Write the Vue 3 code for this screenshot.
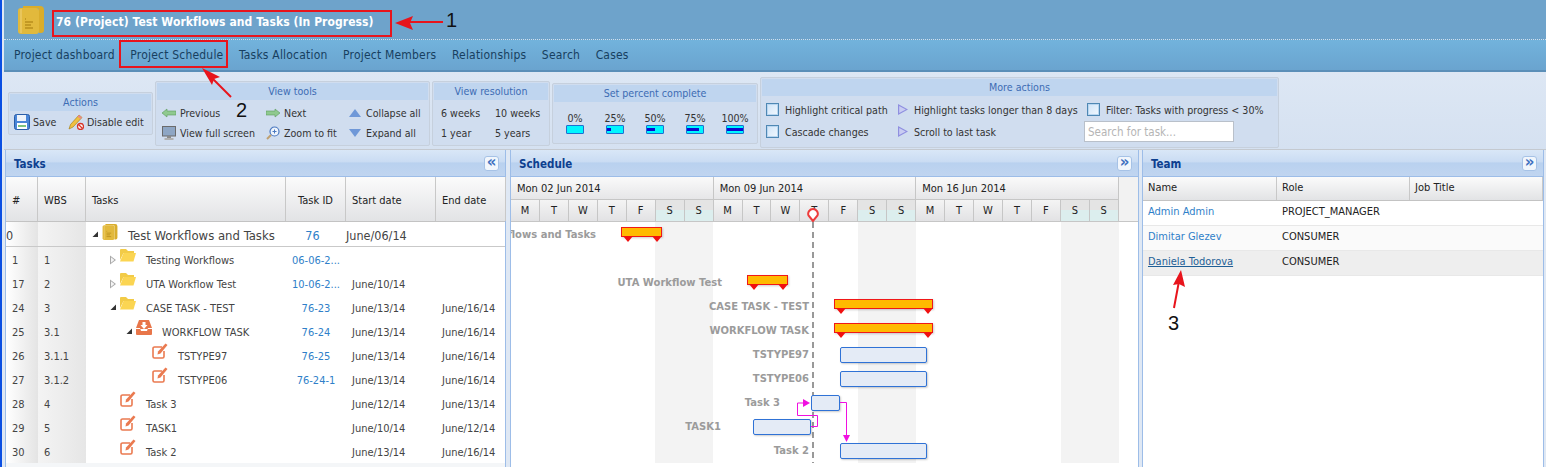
<script setup>
import { computed } from 'vue'

const navItems = ['Project dashboard', 'Project Schedule', 'Tasks Allocation', 'Project Members', 'Relationships', 'Search', 'Cases']

const tasks = [
  { num: 1, wbs: '1', level: 24, tree: 'open', icon: 'folder', name: 'Testing Workflows', id: '06-06-2...', start: '', end: '' },
  { num: 17, wbs: '2', level: 24, tree: 'open', icon: 'folder', name: 'UTA Workflow Test', id: '10-06-2...', start: 'June/10/14', end: '' },
  { num: 24, wbs: '3', level: 24, tree: 'down', icon: 'folder', name: 'CASE TASK - TEST', id: '76-23', start: 'June/13/14', end: 'June/16/14' },
  { num: 25, wbs: '3.1', level: 40, tree: 'down', icon: 'inbox', name: 'WORKFLOW TASK', id: '76-24', start: 'June/13/14', end: 'June/16/14' },
  { num: 26, wbs: '3.1.1', level: 56, tree: '', icon: 'edit', name: 'TSTYPE97', id: '76-25', start: 'June/13/14', end: 'June/16/14' },
  { num: 27, wbs: '3.1.2', level: 56, tree: '', icon: 'edit', name: 'TSTYPE06', id: '76-24-1', start: 'June/13/14', end: 'June/16/14' },
  { num: 28, wbs: '4', level: 24, tree: '', icon: 'edit', name: 'Task 3', id: '', start: 'June/12/14', end: 'June/13/14' },
  { num: 29, wbs: '5', level: 24, tree: '', icon: 'edit', name: 'TASK1', id: '', start: 'June/10/14', end: 'June/12/14' },
  { num: 30, wbs: '6', level: 24, tree: '', icon: 'edit', name: 'Task 2', id: '', start: 'June/13/14', end: 'June/16/14' }
]

const weeks = ['Mon 02 Jun 2014', 'Mon 09 Jun 2014', 'Mon 16 Jun 2014']
const days = computed(() => weeks.flatMap(() => ['M', 'T', 'W', 'T', 'F', 'S', 'S']))

// x and y are page coordinates of the chart, the canvas starts at 511,222
const bars = [
  { x: 621, y: 227, w: 41, h: 10, kind: 'summary' },
  { x: 747, y: 275, w: 41, h: 10, kind: 'summary' },
  { x: 834, y: 299, w: 99, h: 10, kind: 'summary' },
  { x: 834, y: 323, w: 99, h: 10, kind: 'summary' },
  { x: 840, y: 347, w: 87, h: 16, kind: 'task' },
  { x: 840, y: 371, w: 87, h: 16, kind: 'task' },
  { x: 811, y: 395, w: 29, h: 16, kind: 'task' },
  { x: 753, y: 419, w: 58, h: 16, kind: 'task' },
  { x: 840, y: 443, w: 87, h: 16, kind: 'task' }
]
const labels = [
  { text: 'Test Workflows and Tasks', end: 597, y: 235 },
  { text: 'UTA Workflow Test', end: 723, y: 283 },
  { text: 'CASE TASK - TEST', end: 810, y: 307 },
  { text: 'WORKFLOW TASK', end: 810, y: 331 },
  { text: 'TSTYPE97', end: 810, y: 355 },
  { text: 'TSTYPE06', end: 810, y: 379 },
  { text: 'Task 3', end: 781, y: 403 },
  { text: 'TASK1', end: 722, y: 427 },
  { text: 'Task 2', end: 810, y: 451 }
]
const weekendBands = [144, 347, 550]

const percents = [0, 25, 50, 75, 100]

const team = [
  { name: 'Admin Admin', role: 'PROJECT_MANAGER' },
  { name: 'Dimitar Glezev', role: 'CONSUMER' },
  { name: 'Daniela Todorova', role: 'CONSUMER', active: true }
]
</script>

<template>
  <div class="page">
    <svg class="defs" width="0" height="0">
      <symbol id="book" viewBox="0 0 26 28">
        <path d="M5 0h17a4 4 0 0 1 4 4v20a3 3 0 0 1-3 3H21V4a2 2 0 0 0-2-2H5z" fill="#d9ad2c" />
        <rect y="2" width="21" height="26" rx="3" fill="#e2b93c" />
        <path d="M3 3v24" stroke="#efd27c" stroke-width="1" />
        <path d="M7 13h1M7 16h8M7 19h6M7 22h8" stroke="#b98f1d" stroke-width="1.4" />
      </symbol>
      <symbol id="folder" viewBox="0 0 16 14">
        <path d="M0 2a1 1 0 0 1 1-1h5l2 2h6v2H3.500L0 12z" fill="#f2cb47" />
        <path d="M3.500 5H16l-2.500 8.500H0z" fill="#fbd552" />
      </symbol>
      <symbol id="inbox" viewBox="0 0 16 16">
        <path d="M3 1h10l3 8v6a1 1 0 0 1-1 1H1a1 1 0 0 1-1-1V9z" fill="#e8764a" />
        <path d="M0 9h4l1 3h6l1-3h4v1H0z" fill="#fff" />
        <path d="M6.500 3h3v3h2l-3.500 4L4.500 6h2z" fill="#fff" />
      </symbol>
      <symbol id="edit" viewBox="0 0 16 16">
        <path d="M10 4H2.500A1.500 1.500 0 0 0 1 5.500v8A1.500 1.500 0 0 0 2.500 15h8a1.500 1.500 0 0 0 1.500-1.500V8" fill="none" stroke="#ea7a50" stroke-width="1.600" />
        <path d="M13.500 0.500l2 1.500L8.500 10.500 5.500 11.500 6 8.500z" fill="#ea7a50" />
      </symbol>
    </svg>

    <header class="title-bar">
      <svg class="title-icon"><use href="#book" /></svg>
      <h1 class="title">76 (Project) Test Workflows and Tasks (In Progress)</h1>
    </header>

    <nav class="nav">
      <a v-for="item in navItems" :key="item" class="nav-item">{{ item }}</a>
    </nav>

    <section class="toolbar">
      <div class="group group-actions">
        <div class="group-title">Actions</div>
        <div class="group-body actions-body">
          <span class="tool">
            <svg class="icon16" viewBox="0 0 16 16">
              <rect x="0.500" y="0.500" width="15" height="15" rx="2" fill="#4a86d8" stroke="#2a5ea8" />
              <rect x="3" y="1" width="9" height="6" fill="#eef3fa" />
              <rect x="3" y="9" width="10" height="6" fill="#fff" />
              <rect x="4" y="11" width="8" height="2" fill="#7fc47f" />
            </svg>
            Save
          </span>
          <span class="tool">
            <svg class="icon16" viewBox="0 0 16 16">
              <path d="M11 1l3 2.500L5 13l-4 2 1.500-4.500z" fill="#f0c040" stroke="#a8841e" stroke-width="0.700" />
              <path d="M11 1l3 2.500-1.500 1.500-3-2.500z" fill="#e88a8a" />
              <circle cx="12.500" cy="12.500" r="3" fill="#fff" stroke="#d8362a" stroke-width="1.300" />
              <path d="M10.500 10.500l4 4" stroke="#d8362a" stroke-width="1.300" />
            </svg>
            Disable edit
          </span>
        </div>
      </div>

      <div class="group group-view">
        <div class="group-title">View tools</div>
        <div class="group-body view-grid">
          <span class="tool">
            <svg class="icon14" viewBox="0 0 14 10"><path d="M0 5l5-4v2h9v4H5v2z" fill="#8fc98f" stroke="#5a9a5a" stroke-width="0.600" /></svg>
            Previous
          </span>
          <span class="tool">
            <svg class="icon14" viewBox="0 0 14 10"><path d="M14 5L9 1v2H0v4h9v2z" fill="#8fc98f" stroke="#5a9a5a" stroke-width="0.600" /></svg>
            Next
          </span>
          <span class="tool tool-small">
            <svg class="icon12" viewBox="0 0 12 8"><path d="M6 0l6 8H0z" fill="#6f98d8" /></svg>
            Collapse all
          </span>
          <span class="tool">
            <svg class="icon14" viewBox="0 0 14 14">
              <rect x="0.500" y="0.500" width="13" height="9.500" fill="#8ea6c4" stroke="#6b6b6b" />
              <rect x="5" y="10" width="4" height="2" fill="#8a8a8a" />
              <rect x="2.500" y="12" width="9" height="2" fill="#b0b0b0" />
            </svg>
            View full screen
          </span>
          <span class="tool">
            <svg class="icon14" viewBox="0 0 14 14">
              <circle cx="8.500" cy="5.500" r="4.500" fill="#eef4fc" stroke="#4a78c0" stroke-width="1.200" />
              <path d="M5 9l-4 4" stroke="#c0a070" stroke-width="2" />
              <path d="M6.500 5.500h4M8.500 3.500v4" stroke="#4a78c0" stroke-width="1" />
            </svg>
            Zoom to fit
          </span>
          <span class="tool tool-small">
            <svg class="icon12" viewBox="0 0 12 8"><path d="M6 8l6-8H0z" fill="#6f98d8" /></svg>
            Expand all
          </span>
        </div>
      </div>

      <div class="group group-res">
        <div class="group-title">View resolution</div>
        <div class="group-body res-grid">
          <span>6 weeks</span><span>10 weeks</span>
          <span>1 year</span><span>5 years</span>
        </div>
      </div>

      <div class="group group-percent">
        <div class="group-title">Set percent complete</div>
        <div class="group-body percent-row">
          <div v-for="p in percents" :key="p" class="percent-item">
            <span class="percent-label">{{ p }}%</span>
            <span class="percent-bar"><i :style="{ width: p * 0.16 + 'px' }"></i></span>
          </div>
        </div>
      </div>

      <div class="group group-more">
        <div class="group-title">More actions</div>
        <div class="group-body more-grid">
          <label class="check"><i class="box"></i>Highlight critical path</label>
          <span class="tool more-link"><i class="play"></i>Highlight tasks longer than 8 days</span>
          <label class="check"><i class="box"></i>Filter: Tasks with progress &lt; 30%</label>
          <label class="check"><i class="box"></i>Cascade changes</label>
          <span class="tool more-link"><i class="play"></i>Scroll to last task</span>
          <input class="search" placeholder="Search for task..." />
        </div>
      </div>
    </section>

    <main class="panels">
      <section class="panel panel-tasks">
        <div class="panel-head">
          <span>Tasks</span>
          <button class="collapse">«</button>
        </div>
        <div class="table-head task-cols">
          <div>#</div><div>WBS</div><div>Tasks</div><div class="id-head">Task ID</div><div>Start date</div><div>End date</div>
        </div>
        <div class="root-row task-cols">
          <div class="c-num root-num">0</div>
          <div class="c-wbs"></div>
          <div class="c-name root-name">
            <i class="tree down"></i>
            <svg class="tree-icon"><use href="#book" /></svg>
            <span>Test Workflows and Tasks</span>
          </div>
          <div class="c-id root-id">76</div>
          <div class="root-start">June/06/14</div>
          <div></div>
        </div>
        <div v-for="t in tasks" :key="t.num" class="task-row task-cols">
          <div class="c-num">{{ t.num }}</div>
          <div class="c-wbs">{{ t.wbs }}</div>
          <div class="c-name" :style="{ paddingLeft: t.level + 'px' }">
            <i class="tree" :class="t.tree"></i>
            <svg class="tree-icon"><use :href="'#' + t.icon" /></svg>
            <span>{{ t.name }}</span>
          </div>
          <div class="c-id">{{ t.id }}</div>
          <div class="c-date">{{ t.start }}</div>
          <div class="c-date">{{ t.end }}</div>
        </div>
      </section>

      <section class="panel panel-schedule">
        <div class="panel-head">
          <span>Schedule</span>
          <button class="collapse">»</button>
        </div>
        <div class="calendar">
          <div class="weeks">
            <div v-for="w in weeks" :key="w" class="week">{{ w }}</div>
          </div>
          <div class="days">
            <div v-for="(d, i) in days" :key="i" class="day" :class="{ weekend: d === 'S' }">{{ d }}</div>
          </div>
          <div class="cal-spare"></div>
        </div>
        <div class="chart">
          <div v-for="b in weekendBands" :key="b" class="band" :style="{ left: b + 'px' }"></div>
          <div class="today"></div>
          <div
            v-for="l in labels"
            :key="l.text"
            class="bar-label"
            :style="{ right: 628 - (l.end - 511) + 'px', top: l.y - 222 - 8 + 'px' }"
          >{{ l.text }}</div>
          <div
            v-for="(b, i) in bars"
            :key="i"
            class="bar"
            :class="b.kind"
            :style="{ left: b.x - 511 + 'px', top: b.y - 222 + 'px', width: b.w + 'px', height: b.h + 'px' }"
          ></div>
          <svg class="links" width="628" height="245">
            <path d="M329 180.500h6.500V214" fill="none" stroke="#f010e0" stroke-width="1" />
            <path d="M332 213h7l-3.500 7z" fill="#f010e0" />
            <path d="M300 204.500h6.500v-11h-20V181H293" fill="none" stroke="#f010e0" stroke-width="1" />
            <path d="M292 177l7 4-7 4z" fill="#f010e0" />
          </svg>
        </div>
        <svg class="today-pin" viewBox="0 0 12 14">
          <path d="M6 13L1.500 7.500A4.800 4.800 0 1 1 10.500 7.500z" fill="#fff" stroke="#ee3b3b" stroke-width="2" />
        </svg>
      </section>

      <section class="panel panel-team">
        <div class="panel-head">
          <span>Team</span>
          <button class="collapse">»</button>
        </div>
        <div class="team-head team-cols">
          <div>Name</div><div>Role</div><div>Job Title</div>
        </div>
        <div v-for="m in team" :key="m.name" class="team-row team-cols" :class="{ active: m.active }">
          <a class="team-name">{{ m.name }}</a>
          <div>{{ m.role }}</div>
          <div></div>
        </div>
      </section>
    </main>

    <!-- annotations painted over the screenshot -->
    <div class="mark mark-title"></div>
    <div class="mark mark-nav"></div>
    <svg class="arrows" width="1546" height="467">
      <g stroke="#e8141c" stroke-width="2" fill="#e8141c">
        <path d="M443 22H408" />
        <path d="M395 23l18-7-3 7 3 7z" stroke="none" />
        <path d="M231 97L212 78" />
        <path d="M202 68l18 9-6 2-2 6z" stroke="none" />
        <path d="M1174 308l5-27" />
        <path d="M1181 270l4 17-6-3-6 1z" stroke="none" />
      </g>
    </svg>
    <span class="callout callout-1">1</span>
    <span class="callout callout-2">2</span>
    <span class="callout callout-3">3</span>
  </div>
</template>

<style scoped>
.page {
  position: relative;
  display: flex;
  flex-direction: column;
  width: 1546px;
  height: 467px;
  overflow: hidden;
  box-sizing: border-box;
  border-left: 2px solid #0b4fe2;
  padding-left: 2px;
  background: #dfe8f4;
  font-family: "DejaVu Sans", sans-serif;
  font-stretch: condensed;
  font-size: 11px;
  color: #333;
}
.defs {
  position: absolute;
}

.title-bar {
  display: flex;
  align-items: center;
  height: 40px;
  flex: none;
  box-sizing: border-box;
  padding-left: 14px;
  background: #6ea3cb;
  border-bottom: 1px dotted #cfe0ee;
}
.title-icon {
  width: 26px;
  height: 28px;
  margin-top: 1px;
}
.title {
  margin: 4px 0 0 12px;
  font-size: 12px;
  font-weight: 700;
  letter-spacing: 0.070px;
  color: #fff;
}

.nav {
  display: flex;
  flex: none;
  align-items: center;
  gap: 15.500px;
  height: 32px;
  box-sizing: border-box;
  padding: 0 0 0 10px;
  background: linear-gradient(#72b3dc, #6aa4cf);
  border-bottom: 2px solid #5b8fb8;
}
.nav-item {
  color: #173f60;
  font-size: 12px;
  letter-spacing: 0.200px;
}

.toolbar {
  display: flex;
  flex: none;
  align-items: center;
  gap: 2px;
  height: 78px;
  box-sizing: border-box;
  padding: 5px 0 0 4px;
  font-size: 10.600px;
  background: linear-gradient(#dde7f4, #d5e1f1);
  border-bottom: 1px solid #c4c9d0;
}
.group {
  display: flex;
  flex-direction: column;
  flex: none;
  box-sizing: border-box;
  padding: 1px;
  border: 1px solid #c6d0dd;
  border-radius: 2px;
  background: #d0ddef;
}
.group-title {
  flex: none;
  height: 17px;
  line-height: 17px;
  text-align: center;
  color: #3d6cb4;
  background: #bfd5ef;
}
.group-body {
  flex: 1;
  min-height: 0;
}
.tool {
  display: flex;
  align-items: center;
  gap: 4px;
  white-space: nowrap;
}
.icon16 {
  width: 16px;
  height: 16px;
}
.icon14 {
  width: 14px;
  height: 14px;
}
.icon12 {
  width: 12px;
  height: 8px;
}
.group-actions {
  width: 145px;
  height: 43px;
}
.actions-body {
  display: grid;
  grid-template-columns: 54px auto;
  align-items: center;
  padding-left: 4px;
}
.actions-body .tool {
  gap: 3px;
}
.group-view {
  width: 275px;
  height: 65px;
}
.view-grid {
  display: grid;
  grid-template-columns: 104px 83px auto;
  align-items: center;
  padding: 3px 0 0 5px;
}
.view-grid .tool-small {
  gap: 5px;
}
.group-res {
  width: 118px;
  height: 65px;
}
.res-grid {
  display: grid;
  grid-template-columns: 54px auto;
  align-items: center;
  padding: 3px 0 0 7px;
}
.group-percent {
  width: 206px;
  height: 61px;
}
.percent-row {
  display: grid;
  grid-template-columns: repeat(5, 40px);
  padding: 11px 0 0 1px;
}
.percent-item {
  display: flex;
  flex-direction: column;
  align-items: center;
  gap: 1px;
}
.percent-label {
  line-height: 11px;
}
.percent-bar {
  display: flex;
  align-items: center;
  width: 18px;
  height: 9px;
  box-sizing: border-box;
  background: #00f6ff;
  border: 1px solid #1f6fd0;
  border-radius: 1px;
}
.percent-bar i {
  display: block;
  height: 3px;
  background: #0a0ad0;
}
.group-more {
  width: 519px;
  height: 71px;
  margin-top: -2px;
}
.more-grid {
  display: grid;
  grid-template-columns: 132px 189px auto;
  grid-template-rows: 22px 22px;
  align-items: center;
  padding: 3px 0 0 4px;
}
.check {
  display: flex;
  align-items: center;
  gap: 6px;
  white-space: nowrap;
}
.box {
  display: block;
  width: 13px;
  height: 13px;
  box-sizing: border-box;
  border: 1px solid #4f88b4;
  box-shadow: inset 0 0 0 1px #b9d6f0;
  background: linear-gradient(135deg, #cfe4f8, #f2f8fe);
}
.more-link {
  gap: 6px;
}
.play {
  position: relative;
  display: block;
  width: 10px;
  height: 11px;
  clip-path: polygon(0 0, 100% 50%, 0 100%);
  background: #8f8fe0;
}
.play::after {
  content: "";
  position: absolute;
  inset: 0;
  clip-path: polygon(12% 18%, 78% 50%, 12% 82%);
  background: #c9cdf2;
}
.search {
  width: 150px;
  height: 21px;
  box-sizing: border-box;
  padding: 0 3px;
  margin-left: -3px;
  border: 1px solid #b9c0ca;
  font-family: inherit;
  font-stretch: condensed;
  font-size: 11.500px;
  background: #fff;
}
.search::placeholder {
  color: #b5b5b5;
}

.panels {
  display: flex;
  flex: 1;
  min-height: 0;
  padding-left: 1px;
}
.panel {
  display: flex;
  flex-direction: column;
  flex: none;
  box-sizing: border-box;
  background: #fff;
  border-left: 1px solid #9dbde8;
  border-right: 1px solid #9dbde8;
}
.panel-tasks {
  width: 501px;
  background: #f4f6f8;
}
.panel-schedule {
  position: relative;
  width: 629px;
  margin-left: 4px;
}
.panel-team {
  width: 402px;
  margin-left: 3px;
}
.panel-head {
  display: flex;
  justify-content: space-between;
  align-items: center;
  flex: none;
  height: 27px;
  box-sizing: border-box;
  padding: 0 6px 0 8px;
  color: #0d3f8f;
  font-size: 11.500px;
  font-weight: 700;
  background: linear-gradient(#d9e7f7 0, #cadcf3 45%, #b9d1ef 50%, #c0d5f0 100%);
  border-bottom: 1px solid #9dbde8;
}
.panel-head span {
  padding-top: 2px;
}
.collapse {
  width: 15px;
  height: 15px;
  padding: 0 0 2px;
  border: 1px solid #a6c2e6;
  border-radius: 3px;
  background: #f1f6fc;
  color: #3d70c0;
  font-family: inherit;
  font-size: 15px;
  line-height: 10px;
  font-weight: 700;
}

.task-cols {
  display: grid;
  grid-template-columns: 32px 48px 200px 60px 90px 70px;
}
.table-head {
  flex: none;
  height: 45px;
  box-sizing: border-box;
  align-items: stretch;
  color: #222;
  background: linear-gradient(#fbfbfb, #e2e3e5);
  border-bottom: 1px solid #c3c3c3;
}
.table-head > div {
  display: flex;
  align-items: center;
  padding: 2px 0 0 6px;
  border-right: 1px solid #c8c8c8;
}
.table-head .id-head {
  justify-content: center;
  padding-left: 0;
}
.root-row {
  flex: none;
  height: 25px;
  align-items: center;
  background: #fff;
  border-bottom: 1px solid #c9c9c9;
  box-sizing: border-box;
  font-size: 12.500px;
}
.task-row {
  flex: none;
  height: 24px;
  align-items: center;
  background: #fff;
}
.c-num {
  align-self: stretch;
  display: flex;
  align-items: center;
  padding: 2px 0 0 6px;
  background: linear-gradient(90deg, #fff, #e4e4e4);
  color: #444;
}
.c-wbs {
  align-self: stretch;
  display: flex;
  align-items: center;
  padding: 2px 0 0 6px;
  background: linear-gradient(90deg, #f4f4f4, #e6e6e6);
  color: #444;
}
.root-num {
  padding-left: 0;
}
.c-name {
  display: flex;
  align-items: center;
  padding-top: 2px;
  color: #444;
  white-space: nowrap;
}
.root-name {
  padding-left: 6px;
  font-size: 13px;
}
.tree {
  position: relative;
  display: block;
  flex: none;
  width: 10px;
  height: 10px;
}
.tree.open {
  clip-path: polygon(0 5%, 60% 50%, 0 95%);
  background: #a9a9a9;
}
.tree.open::after {
  content: "";
  position: absolute;
  inset: 0;
  clip-path: polygon(10% 22%, 44% 50%, 10% 78%);
  background: #f4f4f4;
}
.tree.down {
  clip-path: polygon(60% 15%, 60% 70%, 5% 70%);
  background: #333;
}
.tree-icon {
  flex: none;
  width: 16px;
  height: 16px;
  margin: -10px 10px 0 0;
}
.root-name .tree-icon {
  margin-top: -6px;
}
.c-id {
  padding-top: 2px;
  text-align: center;
  color: #2f7fc9;
  white-space: nowrap;
}
.root-id {
  padding-right: 7px;
}
.root-start {
  padding-top: 2px;
  color: #444;
}
.c-date {
  padding: 2px 0 0 6px;
  color: #444;
}

.calendar {
  position: relative;
  flex: none;
  height: 45px;
  background: linear-gradient(#f8f8f8, #e4e4e6);
  border-bottom: 1px solid #c6c6c6;
  box-sizing: border-box;
}
.weeks {
  display: flex;
  height: 23px;
  width: 608px;
  border-bottom: 1px solid #c6c6c6;
  box-sizing: border-box;
}
.week {
  width: 202.650px;
  box-sizing: border-box;
  padding: 5px 0 0 6px;
  color: #222;
  border-right: 1px solid #c6c6c6;
  background: linear-gradient(#fafafa, #e6e6e8);
}
.days {
  display: grid;
  grid-template-columns: repeat(21, 28.950px);
  height: 21px;
}
.day {
  line-height: 21px;
  text-align: center;
  color: #222;
  border-right: 1px solid #c6c6c6;
  background: linear-gradient(#f4f4f4, #e2e2e4);
}
.day.weekend {
  background: linear-gradient(#e4e4e4 0, #e4e4e4 48%, #dceeee 48%, #dceeee 100%);
}
.cal-spare {
  position: absolute;
  top: 0;
  left: 608px;
  right: 0;
  bottom: 0;
  background: #f2f2f2;
}
.chart {
  position: relative;
  flex: none;
  height: 241px;
  overflow: hidden;
  background: #fff;
}
.band {
  position: absolute;
  top: 0;
  bottom: 0;
  width: 58px;
  background: #f3f3f3;
}
.today {
  position: absolute;
  top: 0;
  bottom: 0;
  left: 301px;
  width: 2px;
  background: repeating-linear-gradient(#999 0 6px, transparent 6px 10px);
}
.bar-label {
  position: absolute;
  height: 16px;
  line-height: 16px;
  white-space: nowrap;
  font-stretch: normal;
  font-weight: 700;
  font-size: 10px;
  color: #9b9b9b;
}
.bar {
  position: absolute;
  box-sizing: border-box;
  box-shadow: 1px 1px 2px rgba(0, 0, 0, 0.2);
}
.bar.summary {
  background: #ffba00;
  border: 1px solid #f01818;
}
.bar.summary::before,
.bar.summary::after {
  content: "";
  position: absolute;
  top: 8px;
  width: 0;
  height: 0;
  border-style: solid;
  border-width: 6px 5px 0 5px;
  border-color: #f01010 transparent transparent transparent;
}
.bar.summary::before {
  left: 1px;
}
.bar.summary::after {
  right: -1px;
}
.bar.task {
  background: #e4ebf6;
  border: 1px solid #2f72d6;
  border-radius: 2px;
}
.links {
  position: absolute;
  top: 0;
  left: 0;
}
.today-pin {
  position: absolute;
  top: 58px;
  left: 296px;
  width: 12px;
  height: 14px;
}

.team-cols {
  display: grid;
  grid-template-columns: 134px 133px 133px;
}
.team-head {
  flex: none;
  height: 24px;
  align-items: stretch;
  color: #222;
  background: linear-gradient(#fbfbfb, #e2e3e5);
  border-bottom: 1px solid #c3c3c3;
  box-sizing: border-box;
}
.team-head > div {
  display: flex;
  align-items: center;
  padding: 0 0 3px 5px;
  border-right: 1px solid #c8c8c8;
}
.team-row {
  flex: none;
  height: 25px;
  box-sizing: border-box;
  padding-bottom: 4px;
  align-items: center;
  color: #222;
  border-bottom: 1px solid #e8e8e8;
}
.team-row > * {
  padding-left: 5px;
}
.team-row:nth-of-type(even) {
  background: #fafafa;
}
.team-row.active {
  background: #eee;
}
.team-name {
  color: #2f7fc9;
}
.team-row.active .team-name {
  color: #1f5f96;
  text-decoration: underline;
}

.mark {
  position: absolute;
  box-sizing: border-box;
  border: 2px solid #e8141c;
}
.mark-title {
  top: 10px;
  left: 50px;
  width: 340px;
  height: 27px;
}
.mark-nav {
  top: 40px;
  left: 117px;
  width: 109px;
  height: 28px;
}
.arrows {
  position: absolute;
  top: 0;
  left: -2px;
}
.callout {
  position: absolute;
  font-family: "Liberation Sans", sans-serif;
  font-size: 20px;
  line-height: 20px;
  color: #111;
}
.callout-1 {
  top: 10px;
  left: 444px;
}
.callout-2 {
  top: 100px;
  left: 234px;
}
.callout-3 {
  top: 313px;
  left: 1166px;
}
</style>

<style>
body {
  margin: 0;
}
</style>
